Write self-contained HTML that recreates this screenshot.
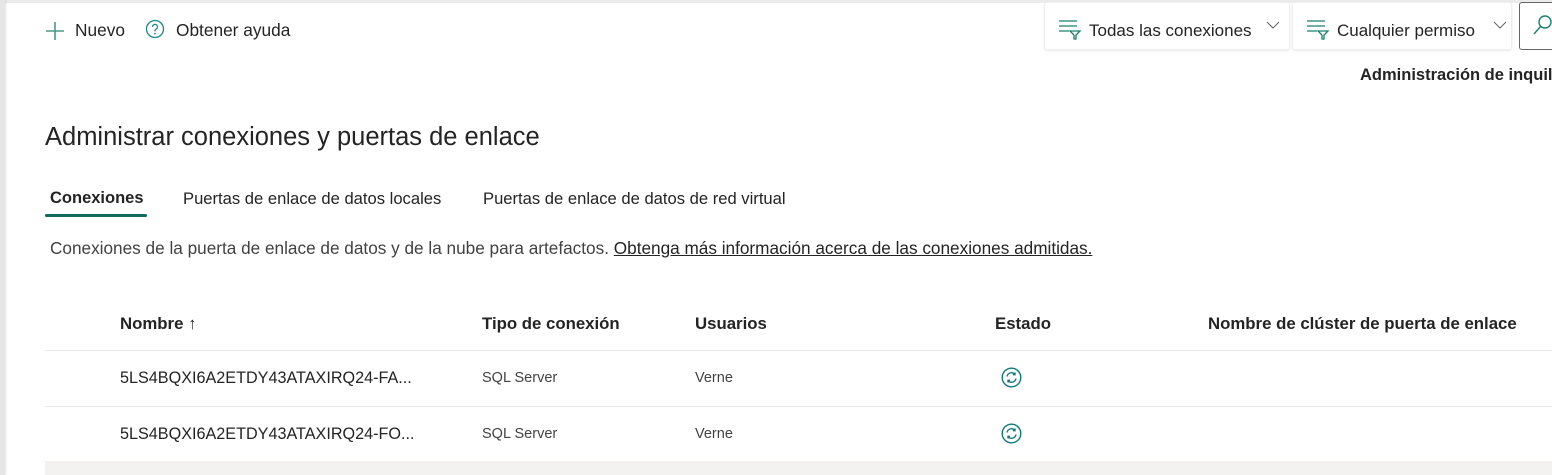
<!DOCTYPE html>
<html><head><meta charset="utf-8"><style>
*{margin:0;padding:0;box-sizing:border-box}
body{width:1552px;height:475px;overflow:hidden;background:#fff;font-family:"Liberation Sans",sans-serif;color:#242424;position:relative}
.a{position:absolute;white-space:nowrap}
</style></head><body>
<div class="a" style="left:0;top:0;width:1552px;height:3px;background:#ebebeb"></div>
<div class="a" style="left:0;top:0;width:5px;height:475px;background:#e6e6e6;box-shadow:1px 0 2px rgba(0,0,0,.12)"></div>

<svg class="a" style="left:44px;top:20px" width="22" height="22" viewBox="0 0 22 22"><path d="M11 2v18M2 11h18" stroke="#4a9a8a" stroke-width="1.6"/></svg>
<div class="a" style="left:75px;top:20px;font-size:17.3px">Nuevo</div>
<svg class="a" style="left:145px;top:19px" width="20" height="20" viewBox="0 0 20 20"><circle cx="10" cy="10" r="8.5" fill="none" stroke="#1b8a8a" stroke-width="1.3"/><path d="M7.5 8a2.5 2.5 0 1 1 3.5 2.2c-.7.4-1 .8-1 1.6v.6" fill="none" stroke="#1b8a8a" stroke-width="1.3"/><circle cx="10" cy="14.6" r=".9" fill="#1b8a8a"/></svg>
<div class="a" style="left:176px;top:20px;font-size:17.3px">Obtener ayuda</div>

<div class="a" style="left:1044px;top:2px;width:246px;height:48px;border:1px solid #eee;border-radius:3px;box-shadow:0 1px 2px rgba(0,0,0,.08)"></div>
<div class="a" style="left:1292px;top:2px;width:220px;height:48px;border:1px solid #eee;border-radius:3px;box-shadow:0 1px 2px rgba(0,0,0,.08)"></div>
<div class="a" style="left:1519px;top:2px;width:40px;height:48px;border:1px solid #666;border-radius:3px"></div>
<svg class="a" style="left:1058px;top:20px" width="24" height="20" viewBox="0 0 24 20"><path d="M1 1h18M1 6h18M1 11h10M12 11h10l-4 4v4h-2v-4z" fill="none" stroke="#1b7f6e" stroke-width="1.3"/></svg>
<div class="a" style="left:1089px;top:21px;font-size:17px">Todas las conexiones</div>
<svg class="a" style="left:1266px;top:20px" width="14" height="10" viewBox="0 0 14 10"><path d="M1 2l6 6 6-6" fill="none" stroke="#666" stroke-width="1"/></svg>
<svg class="a" style="left:1306px;top:20px" width="24" height="20" viewBox="0 0 24 20"><path d="M1 1h18M1 6h18M1 11h10M12 11h10l-4 4v4h-2v-4z" fill="none" stroke="#1b7f6e" stroke-width="1.3"/></svg>
<div class="a" style="left:1337px;top:21px;font-size:17px">Cualquier permiso</div>
<svg class="a" style="left:1493px;top:20px" width="14" height="10" viewBox="0 0 14 10"><path d="M1 2l6 6 6-6" fill="none" stroke="#666" stroke-width="1"/></svg>
<svg class="a" style="left:1532px;top:14px" width="20" height="22" viewBox="0 0 20 22"><circle cx="13" cy="8" r="6" fill="none" stroke="#1b7f6e" stroke-width="1.4"/><path d="M8.5 12.5L2 20" stroke="#1b7f6e" stroke-width="1.4"/></svg>

<div class="a" style="left:1360px;top:66px;font-size:16.5px;font-weight:bold">Administración de inquil</div>

<div class="a" style="left:45px;top:123px;font-size:25.5px">Administrar conexiones y puertas de enlace</div>

<div class="a" style="left:50px;top:189px;font-size:16.5px;font-weight:bold">Conexiones</div>
<div class="a" style="left:45px;top:214px;width:102px;height:3px;background:#0f6b5c;border-radius:2px"></div>
<div class="a" style="left:183px;top:189px;font-size:16.6px">Puertas de enlace de datos locales</div>
<div class="a" style="left:483px;top:189px;font-size:16.6px">Puertas de enlace de datos de red virtual</div>

<div class="a" style="left:50px;top:238px;font-size:17.2px;color:#424242">Conexiones de la puerta de enlace de datos y de la nube para artefactos. <span style="color:#242424;text-decoration:underline">Obtenga más información acerca de las conexiones admitidas.</span></div>

<div class="a" style="left:120px;top:314px;font-size:16.8px;font-weight:bold">Nombre <span style="font-weight:normal">↑</span></div>
<div class="a" style="left:482px;top:314px;font-size:16.8px;font-weight:bold">Tipo de conexión</div>
<div class="a" style="left:695px;top:314px;font-size:16.8px;font-weight:bold">Usuarios</div>
<div class="a" style="left:995px;top:314px;font-size:16.8px;font-weight:bold">Estado</div>
<div class="a" style="left:1208px;top:314px;font-size:16.8px;font-weight:bold">Nombre de clúster de puerta de enlace</div>
<div class="a" style="left:45px;top:350px;width:1507px;height:1px;background:#ebebeb"></div>

<div class="a" style="left:120px;top:369px;font-size:16.2px">5LS4BQXI6A2ETDY43ATAXIRQ24-FA...</div>
<div class="a" style="left:482px;top:370px;font-size:14.5px;color:#424242">SQL Server</div>
<div class="a" style="left:695px;top:370px;font-size:14.5px;color:#424242">Verne</div>
<svg class="a" style="left:1001px;top:367px" width="21" height="21" viewBox="0 0 21 21"><circle cx="10.5" cy="10.5" r="9.3" fill="none" stroke="#0f7b74" stroke-width="1.4"/><path d="M6 9.5a4.6 4.6 0 0 1 8-2.2M14 5.5v2.2h-2.2M15 11.5a4.6 4.6 0 0 1-8 2.2M7 15.5v-2.2h2.2" fill="none" stroke="#0f7b74" stroke-width="1.4"/></svg>
<div class="a" style="left:45px;top:406px;width:1507px;height:1px;background:#ebebeb"></div>

<div class="a" style="left:120px;top:425px;font-size:16.2px">5LS4BQXI6A2ETDY43ATAXIRQ24-FO...</div>
<div class="a" style="left:482px;top:426px;font-size:14.5px;color:#424242">SQL Server</div>
<div class="a" style="left:695px;top:426px;font-size:14.5px;color:#424242">Verne</div>
<svg class="a" style="left:1001px;top:423px" width="21" height="21" viewBox="0 0 21 21"><circle cx="10.5" cy="10.5" r="9.3" fill="none" stroke="#0f7b74" stroke-width="1.4"/><path d="M6 9.5a4.6 4.6 0 0 1 8-2.2M14 5.5v2.2h-2.2M15 11.5a4.6 4.6 0 0 1-8 2.2M7 15.5v-2.2h2.2" fill="none" stroke="#0f7b74" stroke-width="1.4"/></svg>

<div class="a" style="left:45px;top:461px;width:1507px;height:14px;background:#f3f2f1"></div>
</body></html>
